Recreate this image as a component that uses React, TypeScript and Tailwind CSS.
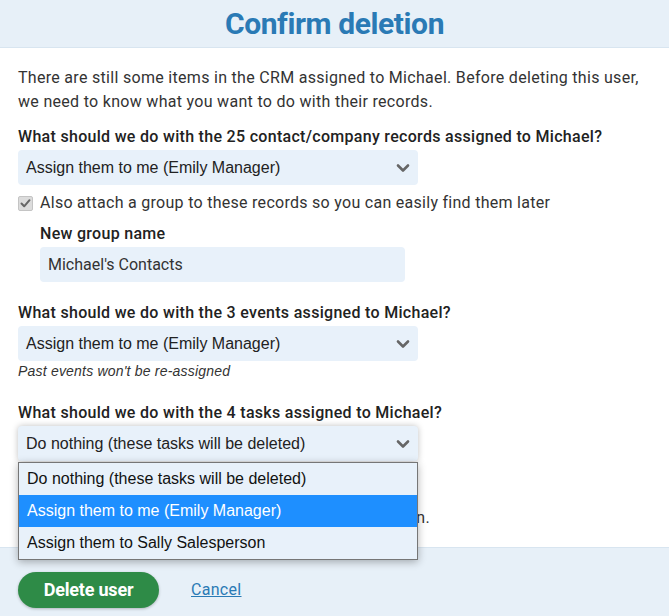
import React from "react";

const Chevron = () => (
  <svg width="14" height="10" viewBox="0 0 14 10" className="shrink-0">
    <path d="M2 2.5 L7 7.5 L12 2.5" fill="none" stroke="#666" strokeWidth="2.6" strokeLinecap="round" strokeLinejoin="round" />
  </svg>
);

const Select = ({ text, focused }: { text: string; focused?: boolean }) => (
  <div
    className={
      "w-[400px] h-[35px] rounded-[4px] bg-[#e8f1fa] flex items-center justify-between pl-[8px] pr-[8px] text-[16px] text-[#222] " +
      (focused ? "shadow-[0_0_6px_rgba(0,0,0,0.25)]" : "")
    }
    style={{ fontFamily: '"Liberation Sans", Arial, sans-serif' }}
  >
    <span>{text}</span>
    <Chevron />
  </div>
);

export default function App() {
  return (
    <div
      className="w-[669px] h-[616px] flex flex-col bg-white text-[#333] overflow-hidden"
      style={{ fontFamily: 'Roboto, "Liberation Sans", sans-serif' }}
    >
      <div className="h-[48px] shrink-0 bg-[#e7f0f8] border-b border-[#d8e5f0] flex items-center justify-center">
        <h1 className="text-[30px] font-bold text-[#2a7ab5] tracking-[-0.4px] leading-none">
          Confirm deletion
        </h1>
      </div>

      <div className="flex-1 relative px-[18px] pt-[18px]">
        <p className="text-[16px] leading-[24px] text-[#333] w-[630px] tracking-[0.3px]">
          There are still some items in the CRM assigned to Michael. Before deleting this user, we need to know what you
          want to do with their records.
        </p>

        <div className="mt-[11px] text-[16px] leading-[24px] font-medium text-[#222] tracking-[0.3px]">
          What should we do with the 25 contact/company records assigned to Michael?
        </div>
        <div className="mt-[1px]">
          <Select text="Assign them to me (Emily Manager)" />
        </div>

        <label className="mt-[6px] flex items-center gap-[7px] text-[16px] leading-[24px] text-[#333] tracking-[0.28px]">
          <span className="w-[15px] h-[15px] rounded-[2px] bg-[#dcdcdc] border border-[#c4c4c4] flex items-center justify-center">
            <svg width="13" height="13" viewBox="0 0 13 13">
              <path d="M2.5 6.5 L5.2 9.3 L10.5 3.2" fill="none" stroke="#666" strokeWidth="2" strokeLinecap="round" strokeLinejoin="round" />
            </svg>
          </span>
          Also attach a group to these records so you can easily find them later
        </label>

        <div className="pl-[22px]">
          <div className="mt-[7px] text-[16px] leading-[24px] font-medium text-[#222] tracking-[0.3px]">New group name</div>
          <div className="mt-[1px] w-[365px] h-[35px] rounded-[4px] bg-[#e8f1fa] flex items-center pl-[8px] text-[16px] text-[#333]">
            Michael's Contacts
          </div>
        </div>

        <div className="mt-[19px] text-[16px] leading-[24px] font-medium text-[#222] tracking-[0.3px]">
          What should we do with the 3 events assigned to Michael?
        </div>
        <div className="mt-[1px]">
          <Select text="Assign them to me (Emily Manager)" />
        </div>
        <div
          className="text-[14px] leading-[20px] italic text-[#333] tracking-[0.2px]"
          style={{ fontFamily: '"Liberation Sans", Arial, sans-serif' }}
        >
          Past events won't be re-assigned
        </div>

        <div className="mt-[20px] text-[16px] leading-[24px] font-medium text-[#222] tracking-[0.3px]">
          What should we do with the 4 tasks assigned to Michael?
        </div>
        <div className="mt-[1px]">
          <Select text="Do nothing (these tasks will be deleted)" focused />
        </div>

        <div className="mt-[45px] w-[412px] text-right whitespace-nowrap text-[16px] leading-[24px] text-[#333] tracking-[0.3px]">
          Completed tasks stay in the organization.
        </div>

        <div
          className="absolute left-[18px] top-[414px] w-[400px] bg-[#e8f1fa] border border-[#767676] shadow-[0_2px_8px_rgba(0,0,0,0.3)] text-[16px] text-[#111]"
          style={{ fontFamily: '"Liberation Sans", Arial, sans-serif' }}
        >
          <div className="h-[32px] flex items-center pl-[8px]">Do nothing (these tasks will be deleted)</div>
          <div className="h-[32px] flex items-center pl-[8px] bg-[#1e8fff] text-white">Assign them to me (Emily Manager)</div>
          <div className="h-[32px] flex items-center pl-[8px]">Assign them to Sally Salesperson</div>
        </div>
      </div>

      <div className="h-[69px] shrink-0 bg-[#e7f0f8] border-t border-[#d8e5f0] flex items-center px-[18px] gap-[32px]">
        <button className="h-[36px] w-[141px] rounded-full bg-[#2e8b47] text-white text-[18px] font-bold tracking-[-0.2px] shadow-[0_1px_3px_rgba(0,0,0,0.25)] mt-[15px]">
          Delete user
        </button>
        <a className="text-[16px] text-[#2a7ab5] underline mt-[15px] tracking-[0.3px]">Cancel</a>
      </div>
    </div>
  );
}
